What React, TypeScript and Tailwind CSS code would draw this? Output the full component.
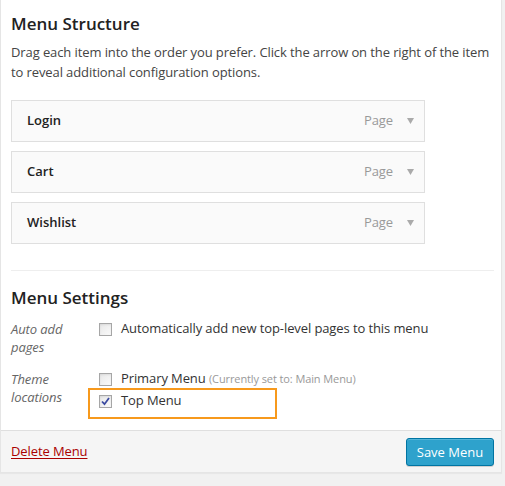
import React from "react";

function Box({ checked }: { checked?: boolean }) {
  return (
    <span className="relative inline-flex h-[13px] w-[13px] shrink-0 items-center justify-center border border-[#a6a6a6] bg-[linear-gradient(135deg,#e8e8e8,#fafafa)] shadow-[inset_0_1px_2px_rgba(0,0,0,0.08)]">
      {checked && (
        <svg width="9" height="9" viewBox="0 0 9 9" className="block">
          <path d="M1 4.5 L3.5 7.2 L8 1" fill="none" stroke="#3b4aa0" strokeWidth="1.8" />
        </svg>
      )}
    </span>
  );
}

function Item({ title }: { title: string }) {
  return (
    <div className="flex h-[42px] w-[414px] items-center justify-between border border-[#dfdfdf] bg-[#fafafa] pl-[15px] pr-[10px]">
      <span className="text-[13px] font-semibold text-[#222]">{title}</span>
      <span className="flex items-center gap-[14px]">
        <span className="text-[13px] tracking-[-0.1px] text-[#999]">Page</span>
        <svg width="7" height="6" viewBox="0 0 7 6" className="block">
          <path d="M0 0 H7 L3.5 6 Z" fill="#aaa" />
        </svg>
      </span>
    </div>
  );
}

export default function App() {
  return (
    <div
      className="h-[486px] w-[505px] overflow-hidden bg-[#f1f1f1]"
      style={{ fontFamily: '"Open Sans", "Liberation Sans", sans-serif' }}
    >
      <div className="w-[502px] border-x border-b border-[#e5e5e5] bg-white shadow-[0_1px_1px_rgba(0,0,0,0.04)]">
        <div className="pl-[10px] pr-[7px] pt-[12px]">
          <h3 className="text-[17px] font-semibold leading-[24px] text-[#222]">Menu Structure</h3>
          <p className="mt-[6px] text-[13px] leading-[20px] tracking-[-0.1px] text-[#444]">
            Drag each item into the order you prefer. Click the arrow on the right of the item to reveal additional configuration options.
          </p>
          <div className="mt-[18px] flex flex-col gap-[9px]">
            <Item title="Login" />
            <Item title="Cart" />
            <Item title="Wishlist" />
          </div>
          <div className="mt-[26px] border-t border-[#eeeeee]" />
          <h3 className="mt-[15px] text-[17px] font-semibold leading-[24px] text-[#222]">Menu Settings</h3>
          <div className="mt-[10px] flex">
            <div className="w-[88px] text-[13px] italic leading-[18px] tracking-[-0.1px] text-[#666]">
              Auto add
              <br />
              pages
            </div>
            <label className="flex h-[18px] items-center gap-[9px] text-[13px] tracking-[-0.1px] text-[#333]">
              <Box />
              <span>Automatically add new top-level pages to this menu</span>
            </label>
          </div>
          <div className="relative mt-[14px] flex pb-[20px]">
            <div className="w-[88px] text-[13px] italic leading-[18px] tracking-[-0.1px] text-[#666]">
              Theme
              <br />
              locations
            </div>
            <div className="flex flex-col gap-[4px]">
              <label className="flex h-[18px] items-center gap-[9px] text-[13px] tracking-[-0.1px] text-[#333]">
                <Box />
                <span>
                  Primary Menu <span className="text-[11px] text-[#999]">(Currently set to: Main Menu)</span>
                </span>
              </label>
              <label className="flex h-[18px] items-center gap-[9px] text-[13px] tracking-[-0.1px] text-[#333]">
                <Box checked />
                <span>Top Menu</span>
              </label>
            </div>
            <div className="absolute left-[77px] top-[18px] h-[31px] w-[189px] border-2 border-[#f7991c]" />
          </div>
        </div>
        <div className="flex h-[42px] items-center justify-between border-t border-[#dfdfdf] bg-[#f5f5f5] pl-[10px] pr-[7px]">
          <a href="#" className="text-[13px] tracking-[-0.1px] text-[#aa0000] underline decoration-1 underline-offset-[2px]">
            Delete Menu
          </a>
          <button className="h-[28px] w-[88px] rounded-[3px] border border-[#0074a2] bg-[#2ea2cc] text-[13px] leading-[26px] text-white shadow-[inset_0_1px_0_rgba(120,200,230,0.5),0_1px_0_rgba(0,0,0,0.15)]">
            Save Menu
          </button>
        </div>
      </div>
    </div>
  );
}
